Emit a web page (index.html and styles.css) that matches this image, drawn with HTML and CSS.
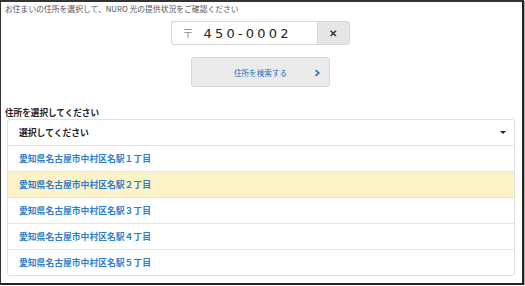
FILE: index.html
```html
<!DOCTYPE html>
<html lang="ja">

<head>
    <meta charset="UTF-8">
    <title>住所検索</title>
    <link rel="stylesheet" href="styles.css">
</head>

<body>

    <div class="frame">
        <p class="lead">お住まいの住所を選択して、NURO 光の提供状況をご確認ください</p>

        <div class="zip-row">
            <div class="zip-box">
                <span class="zip-mark">〒</span>
                <span class="zip-value">450-0002</span>
            </div>
            <button class="zip-clear">&#x2715;</button>
        </div>

        <div class="search-row">
            <button class="search-btn">
                <span>住所を検索する</span>
                <svg class="chev" width="6" height="8" viewBox="0 0 6 8">
                    <path d="M1 0.5 L5 4 L1 7.5 L0 6.3 L2.6 4 L0 1.7 Z" fill="#1f6fc0"/>
                </svg>
            </button>
        </div>

        <div class="label">住所を選択してください</div>

        <!-- address list -->
        <div class="address-list">
            <div class="select-head">
                <span>選択してください</span>
                <span class="caret"></span>
            </div>
            <div class="option">愛知県名古屋市中村区名駅１丁目</div>
            <div class="option active">愛知県名古屋市中村区名駅２丁目</div>
            <div class="option">愛知県名古屋市中村区名駅３丁目</div>
            <div class="option">愛知県名古屋市中村区名駅４丁目</div>
            <div class="option">愛知県名古屋市中村区名駅５丁目</div>
        </div>
    </div>

</body>

</html>
```

FILE: styles.css
```css
body {
    margin: 0;
    padding: 0;
    background-color: #ffffff;
    font-family: "Noto Sans CJK JP", "Noto Sans", sans-serif;
}

.frame {
    box-sizing: border-box;
    width: 524px;
    height: 285px;
    border-top: 2px solid #333;
    border-left: 1px solid #333;
    border-right: 2px solid #222;
    border-bottom: 2px solid #222;
    box-shadow: 1px 1px 0 #aaa;
    padding: 0 0 0 4px;
}

.lead {
    margin: 0;
    padding-top: 1px;
    font-size: 7.8px;
    line-height: 12px;
    color: #555;
}

.zip-row {
    display: flex;
    justify-content: center;
    margin-top: 6px;
    padding-right: 7px;
}

.zip-box {
    box-sizing: border-box;
    width: 146px;
    height: 24px;
    border: 1px solid #d6d6d6;
    border-right: none;
    border-radius: 3px 0 0 3px;
    display: flex;
    align-items: center;
    padding-left: 11px;
}

.zip-mark {
    font-size: 11px;
    color: #999;
    margin-right: 10px;
}

.zip-value {
    font-family: "DejaVu Sans", sans-serif;
    font-size: 13px;
    letter-spacing: 3.2px;
    color: #222;
}

.zip-clear {
    width: 33px;
    height: 24px;
    border: 1px solid #d6d6d6;
    border-radius: 0 3px 3px 0;
    background-color: #e6e6e6;
    color: #333;
    font-size: 10px;
    font-weight: bold;
    padding: 0;
}

.search-row {
    display: flex;
    justify-content: center;
    margin-top: 12px;
    padding-right: 6px;
}

.search-btn {
    box-sizing: border-box;
    width: 139px;
    height: 30px;
    border: 1px solid #d8d8d8;
    border-radius: 3px;
    background-color: #ebebeb;
    color: #1f6fc0;
    font-family: "Noto Sans CJK JP", sans-serif;
    font-size: 7.6px;
    display: flex;
    align-items: center;
    justify-content: center;
    position: relative;
    padding: 0;
}

.search-btn .chev {
    position: absolute;
    right: 8px;
    top: 11px;
}

.label {
    margin-top: 19px;
    font-size: 8.6px;
    font-weight: bold;
    color: #222;
    line-height: 12px;
}

.address-list {
    box-sizing: border-box;
    width: 508px;
    margin-left: 2px;
    margin-top: 1px;
    border: 1px solid #e0e0e0;
    border-radius: 3px;
}

.select-head {
    height: 25px;
    display: flex;
    align-items: center;
    justify-content: space-between;
    padding: 0 8px 0 11px;
    font-size: 8.8px;
    font-weight: bold;
    color: #222;
    border-bottom: 1px solid #e3e3e3;
}

.caret {
    width: 0;
    height: 0;
    border-left: 3px solid transparent;
    border-right: 3px solid transparent;
    border-top: 3.5px solid #222;
}

.option {
    height: 25px;
    display: flex;
    align-items: center;
    padding-left: 11px;
    font-size: 8.8px;
    font-weight: bold;
    color: #2f7fc8;
    border-bottom: 1px solid #e6e6e6;
}

.option:last-child {
    border-bottom: none;
}

.option.active {
    background-color: #fdf3c9;
}
```
